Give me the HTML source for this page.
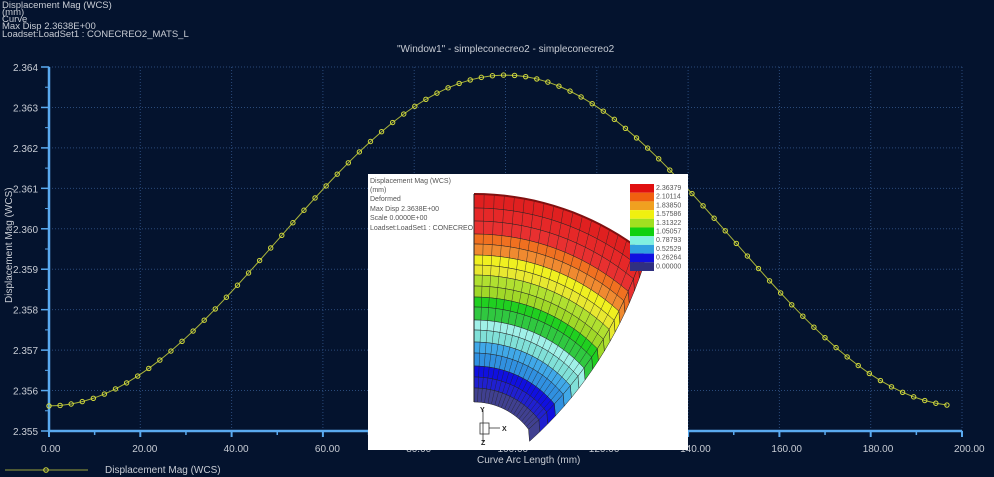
<!DOCTYPE html>
<html><head><meta charset="utf-8"><style>
body{margin:0;width:994px;height:477px;overflow:hidden;background:#04132e;font-family:"Liberation Sans",sans-serif;}
svg{display:block}
</style></head><body>
<svg id="s" width="994" height="477" xmlns="http://www.w3.org/2000/svg" font-family="Liberation Sans, sans-serif">
<rect width="994" height="477" fill="#04132e"/>
<g fill="#c8ccd4" font-size="9.5">
<text x="2" y="8">Displacement Mag (WCS)</text>
<text x="2" y="15">(mm)</text>
<text x="2" y="22">Curve</text>
<text x="2" y="29">Max Disp  2.3638E+00</text>
<text x="2" y="37">Loadset:LoadSet1 :  CONECREO2_MATS_L</text>
</g>
<g fill="#c8ccd4" font-size="10">
<text x="397" y="52">"Window1" - simpleconecreo2 - simpleconecreo2</text>
<text x="477" y="463">Curve Arc Length (mm)</text>
<text x="105" y="473">Displacement Mag (WCS)</text>
<text transform="translate(12,303) rotate(-90)">Displacement Mag (WCS)</text>
</g>
<g id="grid"></g>
<line x1="5" y1="470" x2="88" y2="470" stroke="#9aa23a" stroke-width="1"/>
<circle cx="46" cy="470" r="2.3" fill="none" stroke="#d4dc3c"/>
<g id="curve"></g>
<rect x="368" y="174" width="320" height="276" fill="#fff"/>
<g font-size="7" fill="#555">
<text x="370" y="183">Displacement Mag (WCS)</text>
<text x="370" y="192">(mm)</text>
<text x="370" y="201">Deformed</text>
<text x="370" y="211">Max Disp  2.3638E+00</text>
<text x="370" y="220">Scale  0.0000E+00</text>
<text x="370" y="230">Loadset:LoadSet1 :  CONECREO2_MATS_L</text>
</g>
<g id="mesh"></g>
<g id="leg"></g>
<g stroke="#333" fill="none" stroke-width="0.8">
<line x1="483" y1="410" x2="483" y2="442"/><rect x="480" y="423" width="9" height="11"/><line x1="489" y1="428" x2="500" y2="428"/>
</g>
<g font-size="7" fill="#222" font-weight="bold"><text x="480" y="412">Y</text><text x="502" y="431">X</text><text x="481" y="445">Z</text></g>
</svg>
<script>
(function(){
var N="http://www.w3.org/2000/svg";
function el(p,t,a,txt){var e=document.createElementNS(N,t);for(var k in a)e.setAttribute(k,a[k]);if(txt)e.textContent=txt;document.getElementById(p).appendChild(e);return e;}
var X0=49,X1=962,Y0=67,Y1=431;
function px(x){return X0+(X1-X0)*x/200} function py(v){return Y0+(2.364-v)/0.009*(Y1-Y0)}
for(var i=0;i<=10;i++){var x=px(i*20);el('grid','line',{x1:x,y1:Y0,x2:x,y2:Y1,stroke:'#2a4a7a','stroke-dasharray':'1,2','stroke-width':1});
el('grid','text',{x:x-8,y:452,fill:'#c8ccd4','font-size':10},(i*20).toFixed(2));
el('grid','line',{x1:x,y1:Y1,x2:x,y2:Y1+6,stroke:'#5aaaf0','stroke-width':2});
if(i<10)el('grid','line',{x1:px(i*20+10),y1:Y1,x2:px(i*20+10),y2:Y1+4,stroke:'#5aaaf0','stroke-width':1.5});}
for(var j=0;j<=9;j++){var v=2.355+j*0.001,y=py(v);el('grid','line',{x1:X0,y1:y,x2:X1,y2:y,stroke:'#2a4a7a','stroke-dasharray':'1,2','stroke-width':1});
el('grid','text',{x:13,y:y+4,fill:'#c8ccd4','font-size':10},v.toFixed(3));
el('grid','line',{x1:X0-8,y1:y,x2:X0,y2:y,stroke:'#5aaaf0','stroke-width':1.5});
if(j<9)el('grid','line',{x1:X0-4,y1:py(v+0.0005),x2:X0,y2:py(v+0.0005),stroke:'#5aaaf0','stroke-width':1});}
el('grid','line',{x1:X0,y1:Y0,x2:X0,y2:Y1+1,stroke:'#5aaaf0','stroke-width':2.5});
el('grid','line',{x1:X0,y1:Y1,x2:X1,y2:Y1,stroke:'#5aaaf0','stroke-width':2.5});
var pts=[],n=82;for(var k=0;k<n;k++){var x=k*196.7/(n-1);var v=2.35562+(2.3638-2.35562)*(1-Math.cos(2*Math.PI*x/200))/2;pts.push([px(x),py(v)]);}
el('curve','polyline',{points:pts.map(function(p){return p.join(',')}).join(' '),fill:'none',stroke:'#aab43a','stroke-width':1});
pts.forEach(function(p){el('curve','circle',{cx:p[0],cy:p[1],r:2.2,fill:'none',stroke:'#d4dc3c','stroke-width':1});});
var cols=['#e01010','#f06010','#f0a020','#f0f010','#a0e020','#10d010','#80f0e0','#30a0e0','#1010e0','#303080'];
var vals=['2.36379','2.10114','1.83850','1.57586','1.31322','1.05057','0.78793','0.52529','0.26264','0.00000'];
for(var i=0;i<10;i++){el('leg','rect',{x:630,y:184+i*8.7,width:24,height:8.7,fill:cols[i]});el('leg','text',{x:656,y:190+i*8.7,'font-size':7,fill:'#555'},vals[i]);}
var cx=474,cy=470,rin=68,rout=276;
function amax(r){return 0.93+(0.66-0.93)*(r-rin)/(rout-rin);}
function P(r,a){return [cx+r*Math.sin(a),cy-r*Math.cos(a)];}
var bands=[[276,'#e02020'],[262,'#e62828'],[249,'#e83030'],[236,'#f07020'],[226,'#f08a30'],[215,'#f0f020'],[205,'#e8e830'],[195,'#b0e030'],[184,'#a0d828'],[173,'#20d020'],[163,'#30c840'],[150,'#a0f0e8'],[140,'#80e0d8'],[128,'#40a8e8'],[117,'#3090e0'],[104,'#1010e0'],[93,'#2020d0'],[82,'#404090'],[68,'#303070']];
var M=18;
function edge(r,rev){var s=[];for(var m=0;m<=M;m++){var a=amax(r)*m/M;s.push(P(r,a));}if(rev)s.reverse();return s;}
function ps(a){return a.map(function(p){return p.join(',')}).join(' ');}
for(var b=0;b<bands.length-1;b++){var r2=bands[b][0],r1=bands[b+1][0],c=bands[b][1];
el('mesh','polygon',{points:ps(edge(r2,false).concat(edge(r1,true))),fill:c,stroke:'#222','stroke-width':0.5});
for(var m=1;m<M;m++){var p=P(r2,amax(r2)*m/M),q=P(r1,amax(r1)*m/M);el('mesh','line',{x1:p[0],y1:p[1],x2:q[0],y2:q[1],stroke:'#222','stroke-width':0.4});}
var A=P(r2,amax(r2)),B=P(r1,amax(r1));
el('mesh','polygon',{points:ps([A,[A[0]+1,A[1]+12],[B[0]+1,B[1]+12],B]),fill:c,stroke:'#222','stroke-width':0.5});}
el('mesh','polyline',{points:ps(edge(276,false)),fill:'none',stroke:'#801010','stroke-width':2});
el('mesh','line',{x1:474,y1:194,x2:474,y2:402,stroke:'#222','stroke-width':1});
})();
</script>
</body></html>
